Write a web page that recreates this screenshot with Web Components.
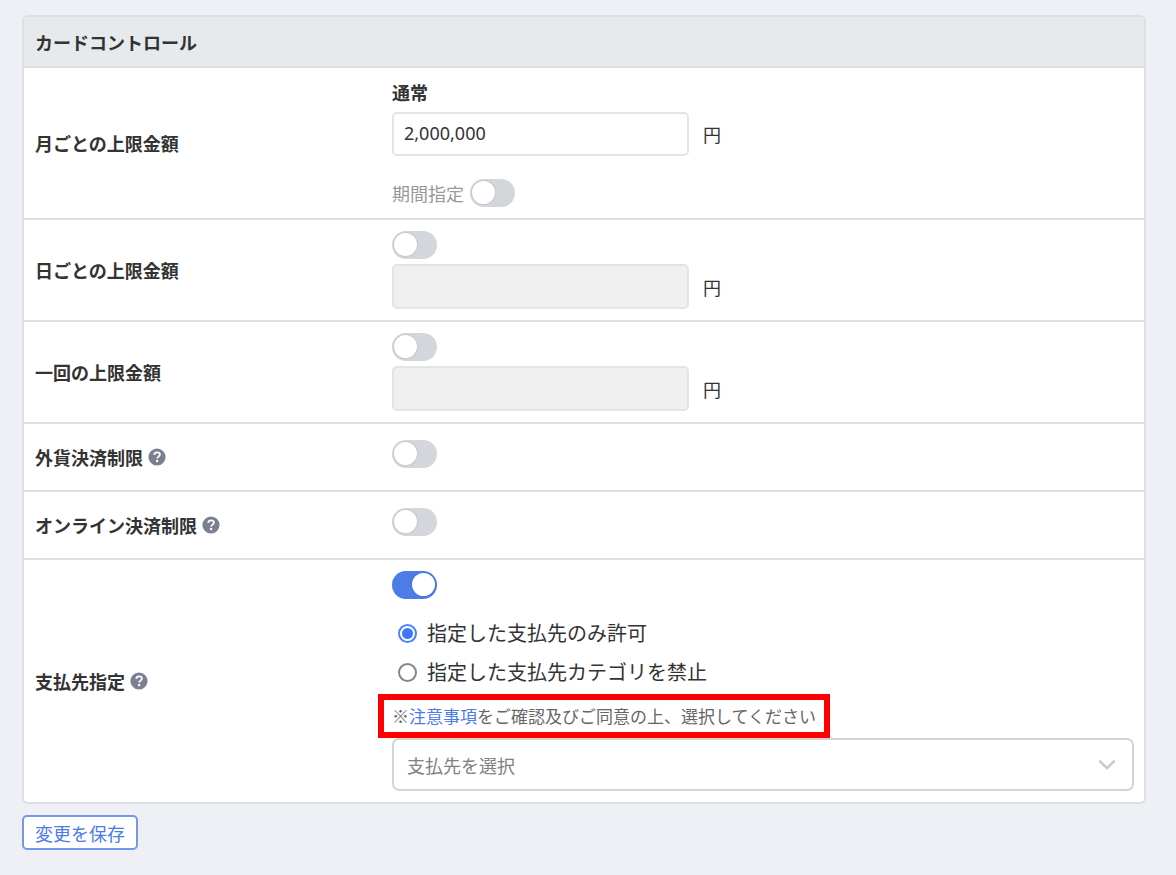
<!DOCTYPE html>
<html lang="ja">
<head>
<meta charset="utf-8">
<meta name="viewport" content="width=device-width, initial-scale=1">
<title>カードコントロール</title>
<style>
  body {
    margin: 0;
    background: #eff0f5;
    color: #333;
    font: 18px/24px "Noto Sans CJK JP", sans-serif;
    --line: #dcdfe3;
    --blue: #4d7be8;
  }
</style>
</head>
<body>
<card-control-page></card-control-page>

<script>
const define = (name, html, setup) => {
  const template = document.createElement('template');
  template.innerHTML = '<style>*{box-sizing:border-box}input,button,select{font:inherit;color:inherit;margin:0}</style>' + html;
  customElements.define(name, class extends HTMLElement {
    constructor() {
      super();
      this.attachShadow({ mode: 'open' }).append(template.content.cloneNode(true));
    }
    connectedCallback() {
      if (setup) setup(this, this.shadowRoot);
    }
  });
};

define('toggle-switch', `
  <style>
    :host { display: block; width: 45px; height: 28px; }
    input {
      appearance: none; display: block; width: 45px; height: 28px;
      padding: 2px; border-radius: 14px; background: #d3d6db; cursor: pointer;
    }
    input::before {
      content: ""; display: block; width: 23px; height: 23px;
      border-radius: 50%; background: #fff; box-shadow: 0 0 2px #0003;
    }
    input:checked { background: var(--blue); }
    input:checked::before { margin-left: auto; }
  </style>
  <input type="checkbox" role="switch">`,
  (host, root) => {
    const input = root.querySelector('input');
    input.checked = host.hasAttribute('checked');
    input.setAttribute('aria-label', host.getAttribute('label'));
  });

define('help-button', `
  <style>
    :host { display: block; }
    button { display: block; border: 0; padding: 0; background: none; cursor: pointer; }
    svg { display: block; }
  </style>
  <button type="button" aria-label="ヘルプ">
    <svg width="18" height="18" viewBox="0 0 18 18">
      <circle cx="9" cy="9" r="8.6" fill="#7b8091"/>
      <path d="M6.2 6.9C6.3 5.2 7.5 4.3 9.1 4.3c1.6 0 2.8.9 2.8 2.3 0 2-2.7 2-2.7 4" fill="none" stroke="#fff" stroke-width="1.8"/>
      <circle cx="9.1" cy="13" r="1.2" fill="#fff"/>
    </svg>
  </button>`);

define('amount-field', `
  <style>
    :host { display: flex; align-items: center; gap: 14px; }
    input {
      width: 297px; height: 44px; padding: 0 10px 2px;
      border: 2px solid #e4e4e6; border-radius: 5px; background: #fff;
      font-family: "Noto Sans", "Noto Sans CJK JP", sans-serif;
    }
    input:disabled { height: 45px; background: #f0f0f0; }
  </style>
  <input type="text" inputmode="numeric" id="amount">
  <label for="amount">円</label>`,
  (host, root) => {
    const input = root.querySelector('input');
    input.value = host.getAttribute('value') || '';
    input.disabled = host.hasAttribute('disabled');
  });

define('setting-row', `
  <style>
    :host {
      display: grid; grid-template-columns: 356px minmax(0, 1fr);
      align-items: center; border-top: 2px solid var(--line);
    }
    .name { display: flex; align-items: center; gap: 5px; padding: 0 11px; font-weight: 700; }
    .value { padding: 11px 10px 11px 12px; }
  </style>
  <div class="name"><slot name="name"></slot></div>
  <div class="value"><slot></slot></div>`);

define('settings-card', `
  <style>
    :host {
      display: block; overflow: hidden; background: #fff;
      border: 2px solid var(--line); border-radius: 6px;
    }
    h2 { margin: 0; padding: 13px 11px 12px; background: #e6eaed; font-size: 18px; line-height: 24px; }
  </style>
  <h2><slot name="title"></slot></h2>
  <slot></slot>`);

define('payee-options', `
  <style>
    :host { display: block; }
    fieldset { display: grid; gap: 15px; margin: 0; padding: 0; border: 0; font-size: 20px; }
    label { display: flex; align-items: center; gap: 10px; padding-left: 6px; }
    input {
      appearance: none; width: 19px; height: 19px; padding: 2px;
      border: 2px solid #858585; border-radius: 50%;
    }
    input:checked { border-color: #4a82fb; background: #3b78fb content-box; }
  </style>
  <fieldset aria-label="支払先指定の方法">
    <label><input type="radio" name="mode" checked>指定した支払先のみ許可</label>
    <label><input type="radio" name="mode">指定した支払先カテゴリを禁止</label>
  </fieldset>`);

define('notice-text', `
  <style>
    :host { display: block; }
    p {
      width: max-content; margin: 0 0 0 -14px; padding: 4px 8px;
      border: 6px solid #f00; font-size: 17px; line-height: 24px; color: #666;
    }
    a { color: var(--blue); text-decoration: none; }
  </style>
  <p>※<a href="#notice">注意事項</a>をご確認及びご同意の上、選択してください</p>`);

define('payee-select', `
  <style>
    :host { display: grid; align-items: center; }
    select, svg { grid-area: 1 / 1; }
    select {
      appearance: none; width: 100%; height: 53px; padding: 0 13px;
      border: 2px solid #d4d4d4; border-radius: 7px; background: #fff; color: #808080;
    }
    svg { justify-self: end; margin-right: 17px; pointer-events: none; }
  </style>
  <select aria-label="支払先"><option>支払先を選択</option></select>
  <svg width="20" height="20" viewBox="0 0 20 20" fill="none" stroke="#ccc" stroke-width="2.6" stroke-linecap="round">
    <path d="M3.2 6.5 10 13.2 16.8 6.5"/>
  </svg>`);

define('save-button', `
  <style>
    :host { display: block; }
    button {
      display: block; height: 35px; padding: 0 11px; border: 2px solid #7398ef;
      border-radius: 5px; background: #fff; color: var(--blue); cursor: pointer;
    }
  </style>
  <button type="button"><slot></slot></button>`);

define('card-control-page', `
  <style>
    :host { display: block; padding: 15px 30px 24px 22px; }
    h3 { margin: 0; padding: 1px 0 8px; font-size: 18px; line-height: 24px; }
    .period { display: flex; align-items: center; gap: 6px; margin-top: 23px; color: #999; }
    amount-field[disabled] { margin-top: 5px; }
    .single { padding: 5px 0 11px; }
    payee-options { margin-top: 22px; }
    notice-text { margin-top: 10px; }
    save-button { margin-top: 11px; }
  </style>
  <settings-card>
    <span slot="title">カードコントロール</span>
    <setting-row>
      <span slot="name">月ごとの上限金額</span>
      <h3>通常</h3>
      <amount-field value="2,000,000"></amount-field>
      <div class="period"><span>期間指定</span><toggle-switch label="期間指定"></toggle-switch></div>
    </setting-row>
    <setting-row>
      <span slot="name">日ごとの上限金額</span>
      <toggle-switch label="日ごとの上限金額"></toggle-switch>
      <amount-field disabled></amount-field>
    </setting-row>
    <setting-row>
      <span slot="name">一回の上限金額</span>
      <toggle-switch label="一回の上限金額"></toggle-switch>
      <amount-field disabled></amount-field>
    </setting-row>
    <setting-row>
      <span slot="name">外貨決済制限</span><help-button slot="name"></help-button>
      <div class="single"><toggle-switch label="外貨決済制限"></toggle-switch></div>
    </setting-row>
    <setting-row>
      <span slot="name">オンライン決済制限</span><help-button slot="name"></help-button>
      <div class="single"><toggle-switch label="オンライン決済制限"></toggle-switch></div>
    </setting-row>
    <setting-row>
      <span slot="name">支払先指定</span><help-button slot="name"></help-button>
      <toggle-switch label="支払先指定" checked></toggle-switch>
      <payee-options></payee-options>
      <notice-text></notice-text>
      <payee-select></payee-select>
    </setting-row>
  </settings-card>
  <save-button>変更を保存</save-button>`);
</script>
</body>
</html>
